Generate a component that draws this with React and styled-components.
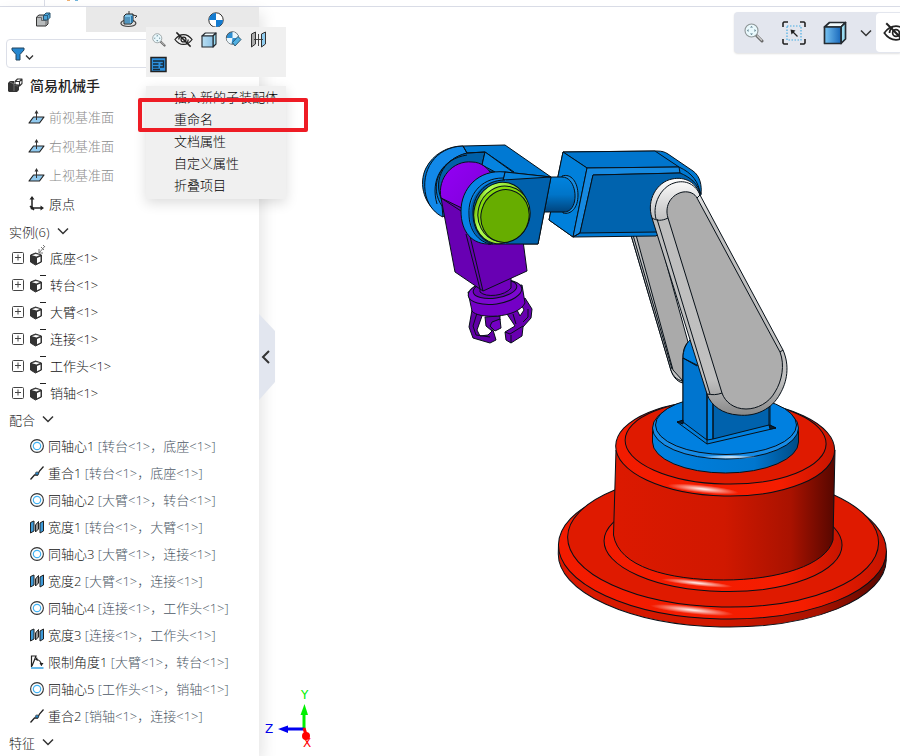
import React from "react";
import styled, { createGlobalStyle } from "styled-components";

const GlobalStyle = createGlobalStyle`
  * {
    box-sizing: border-box;
  }
  body {
    margin: 0;
    background: #fff;
    color: #222;
    font-family: "Open Sans", "Noto Sans CJK SC", sans-serif;
    font-size: 13px;
    font-weight: 300;
  }
  button {
    border: 0;
    padding: 0;
    background: none;
    color: inherit;
    font: inherit;
    cursor: pointer;
  }
  svg {
    display: block;
  }
`;

const Page = styled.div`
  display: flex;
  flex-direction: column;
  min-height: 100vh;
  overflow: hidden;
`;

const TopStrip = styled.header`
  display: flex;
  height: 7px;
  border-bottom: 1px solid #d9dce6;
`;

const StripCell = styled.div`
  width: 45px;
  border-right: 1px solid #d9dce6;
`;

const StripMark = styled.i`
  width: 3px;
  height: 1px;
  margin-left: ${({ gap }) => gap}px;
  background: ${({ color }) => color};
`;

const Main = styled.main`
  position: relative;
  display: flex;
  flex: 1;
`;

const Sidebar = styled.aside`
  position: relative;
  z-index: 1;
  width: 259px;
  flex: none;
  background: #fff;
  box-shadow: 4px 6px 14px rgba(0, 0, 0, 0.1);
`;

const Tabs = styled.div`
  display: flex;
`;

const Tab = styled.button`
  display: flex;
  flex: 1;
  height: 25px;
  align-items: center;
  justify-content: center;
  background: ${({ $active }) => ($active ? "#fff" : "#e9e9e9")};
`;

const Filter = styled.button`
  display: flex;
  width: 246px;
  height: 29px;
  margin: 7px 6px 0;
  padding-left: 4px;
  align-items: center;
  border: 1px solid #dcdfe8;
  border-radius: 4px;
`;

const RootRow = styled.div`
  display: flex;
  height: 34px;
  padding-left: 7px;
  align-items: center;
  gap: 7px;
  font-size: 14px;
  font-weight: 500;
`;

const List = styled.ul`
  margin: 0;
  padding: 0;
  list-style: none;
`;

const Row = styled.li`
  display: flex;
  height: ${({ $tall }) => ($tall ? 29 : 27)}px;
  padding-left: ${({ $indent }) => $indent}px;
  align-items: center;
  gap: 4px;
  color: ${({ $muted }) => ($muted ? "#8c8c8c" : "#111")};
  white-space: nowrap;
`;

const Heading = styled.button`
  display: flex;
  height: 26px;
  padding-left: 9px;
  align-items: center;
  gap: 7px;
`;

const Refs = styled.span`
  color: #4c5866;
`;

const Viewport = styled.section`
  position: relative;
  flex: 1;
  min-width: 0;
`;

const Scene = styled.svg`
  width: 100%;
  height: 100%;
`;

const Handle = styled.button`
  position: absolute;
  z-index: 2;
  top: 307px;
  left: 259px;
  width: 16px;
  height: 86px;
`;

const ViewBar = styled.div`
  position: absolute;
  top: 5px;
  right: 0;
  display: flex;
  height: 41px;
  width: 166px;
  overflow: hidden;
  align-items: center;
  border-radius: 4px 0 0 4px;
  background: #e3e6ee;
  box-shadow: 0 1px 2px rgba(0, 0, 0, 0.12);
`;

const ViewButton = styled.button`
  display: flex;
  width: ${({ $width }) => $width}px;
  height: 39px;
  flex: none;
  align-items: center;
  justify-content: center;
  border-radius: 4px;
  background: ${({ $lit }) => ($lit ? "#fff" : "none")};
`;

const Popup = styled.div`
  position: absolute;
  z-index: 3;
  top: 20px;
  left: 146px;
  display: flex;
  width: 140px;
  flex-direction: column;
  gap: 9px;
`;

const QuickBar = styled.div`
  display: flex;
  flex-wrap: wrap;
  background: #f0f0f0;
`;

const QuickButton = styled.button`
  display: flex;
  width: 25px;
  height: 25px;
  align-items: center;
  justify-content: center;
`;

const Menu = styled.div`
  display: flex;
  padding-bottom: 3px;
  flex-direction: column;
  background: #f0f0f0;
  box-shadow: 0 4px 12px rgba(0, 0, 0, 0.14);
`;

const MenuItem = styled.button`
  height: 22px;
  padding-left: 28px;
  color: #000;
  line-height: 20px;
  text-align: left;
  white-space: nowrap;
`;

const Highlight = styled.div`
  position: absolute;
  z-index: 4;
  top: 91px;
  left: 138px;
  width: 170px;
  height: 34px;
  border: 4px solid #ee1c25;
  border-radius: 2px;
`;

const Chevron = () => (
  <svg width="12" height="8" fill="none" stroke="#333" strokeWidth="1.5">
    <path d="M1 1.5 6 6.500 11 1.5" />
  </svg>
);

const PartIcon = () => (
  <svg width="16" height="16" viewBox="0 0 16 16" strokeLinejoin="round">
    <path d="M1.5 5 4 3h5v4h4v5l-2 2H1.500z" fill="#b9bcbd" stroke="#333" />
    <path d="M1.500 5.500h5v3h4.500V14M11 8.500l2-1.500" fill="none" stroke="#555" strokeWidth=".8" />
    <path d="M8.500 3.500 11 1h4v4.500L12.500 8h-4z" fill="#4aa3d8" stroke="#27506b" />
    <path d="M8.500 3.500h4V8M12.500 3.500 15 1" fill="none" stroke="#27506b" strokeWidth=".8" />
  </svg>
);

const ConfigIcon = () => (
  <svg width="18" height="17" viewBox="0 0 18 17">
    <path d="M4 9.500c-5 1.500-4 6 4.500 6s9-4.500 4.500-6" fill="#ddd" stroke="#444" strokeWidth="1.200" />
    <path d="M9 0v4M13 4l4 1-2 2" fill="none" stroke="#333" />
    <path d="M4 5 6 3h7v7.500L11 13H4z" fill="#7ec3e8" stroke="#222" strokeLinejoin="round" />
    <path d="M11 5h2v6l-2 1z" fill="#2d77a8" />
    <path d="M5 7h5M5 9h5M5 11h5" stroke="#256997" />
  </svg>
);

const MassIcon = () => (
  <svg width="16" height="16" viewBox="0 0 16 16">
    <circle cx="8" cy="8" r="7.200" fill="#fff" stroke="#333" />
    <path d="M8 8V1a7 7 0 0 0-7 7zM8 8v7a7 7 0 0 0 7-7z" fill="#137bd0" />
  </svg>
);

const FunnelIcon = () => (
  <svg width="24" height="16" viewBox="0 0 24 16">
    <path d="M1 2h12v2L9 8.500V14H5V8.500L1 4z" fill="#2687cf" stroke="#23455f" strokeLinejoin="round" />
    <path d="m15 9.500 3.500 3.500L22 9.500" fill="none" stroke="#333" strokeWidth="1.300" />
  </svg>
);

const AssemblyIcon = () => (
  <svg width="16" height="15" viewBox="0 0 16 15" strokeLinejoin="round">
    <path d="M1 5 3 3h4v3l5 1v5l-2 2H2l-1-1z" fill="#333" />
    <path d="m3 4 4 2v7M7 7l4 1" fill="none" stroke="#888" strokeWidth=".7" />
    <path d="M8 3.500 10.500 1H15v4.500L12.500 8V3.500H8V7h4.500M12.500 3.500 15 1" fill="none" stroke="#333" strokeWidth="1.100" />
  </svg>
);

const PlaneIcon = () => (
  <svg width="17" height="16" viewBox="0 0 17 16">
    <path d="M1 14 5.500 8H16l-4.500 6z" fill="#90c9ee" stroke="#222" strokeWidth="1.200" strokeLinejoin="round" />
    <path d="M8.500 11V2.500" stroke="#333" />
    <path d="M6.500 4.500 8.500 1l2 3.500z" fill="#333" />
  </svg>
);

const OriginIcon = () => (
  <svg width="17" height="17" viewBox="0 0 17 17">
    <path d="M4 2.500V13h10M2 11l4 4" fill="none" stroke="#222" strokeWidth="1.500" />
    <path d="M1.500 4.500 4 1l2.500 3.500zM12.500 10.500 16 13l-3.500 2.500z" fill="#222" />
    <circle cx="4" cy="13" r="1.500" fill="#222" />
  </svg>
);

const ExpandIcon = () => (
  <svg width="12" height="12" fill="none" stroke="#444">
    <rect x=".5" y=".5" width="11" height="11" rx="1" />
    <path d="M3 5.500h6M6 2.500v6" />
  </svg>
);

const BodyIcon = ({ fixed }) => (
  <svg width="18" height="26" viewBox="0 0 18 26">
    <g transform="translate(1 1)">
      <path d="m1.500 9 5-2 6 2v7l-6 3-5-3z" fill="#333" stroke="#333" strokeLinejoin="round" />
      <path d="m3 9.200 3.700-1.300 4.300 1.200-3.500 1.500zM8 12l3.500-1.600v5L8 17.200z" fill="#fff" />
    </g>
    {fixed ? (
      <path d="m11 8 6-7M11 4v4h4M13 2l3 3M15 0l2 2" fill="none" stroke="#777" />
    ) : (
      <path d="M12 3.500h6" stroke="#222" />
    )}
  </svg>
);

const ConcentricIcon = () => (
  <svg width="14" height="14" fill="none">
    <circle cx="7" cy="7" r="6.400" stroke="#333" strokeWidth="1.100" />
    <circle cx="7" cy="7" r="3.700" stroke="#42b3f4" strokeWidth="1.200" />
  </svg>
);

const CoincidentIcon = () => (
  <svg width="14" height="14" viewBox="0 0 14 14">
    <path d="m.5 13.500 4-4.500h3l2-4 4-4.500" fill="none" stroke="#222" strokeWidth="1.300" />
    <circle cx="7" cy="7.500" r="1.600" fill="#2385c8" stroke="#333" strokeWidth=".7" />
  </svg>
);

const WidthIcon = () => (
  <svg width="14" height="14" viewBox="0 0 14 14" stroke="#222" strokeLinejoin="round">
    <path d="M.5 2.500 4 1v10L.5 13zM10 3l3.500-2v10L10 13z" fill="#3e9ad8" />
    <path d="M5.500 5 8.500 1.500V9l-3 3z" fill="#999" />
  </svg>
);

const AngleIcon = () => (
  <svg width="14" height="14" viewBox="0 0 14 14">
    <path d="M1.500 12V1h4.500L2 11M6 4.500c3 0 5 2 5.500 6" fill="none" stroke="#222" strokeWidth="1.200" />
    <path d="m7 2-2 2.500L8 6zM9.500 8h4l-2 3z" fill="#222" />
    <path d="M1 13h12.500" stroke="#1593df" strokeWidth="1.300" />
  </svg>
);

const ZoomIcon = ({ size }) => (
  <svg width={size} height={size} viewBox="0 0 20 20">
    <path d="m12.500 12.500 5.500 5.500" stroke="#666" strokeWidth="3" strokeLinecap="round" />
    <path d="m13 12.500 5 5" stroke="#ccc" strokeWidth="1.400" />
    <circle cx="7.500" cy="7.500" r="6.500" fill="#e9f8fc" stroke="#8e9697" strokeWidth="1.100" />
    <path d="M6 4.500 7.500 3 9 4.500zM6 10.500 7.500 12 9 10.500zM4.500 6 3 7.500 4.500 9zM10.500 6 12 7.500 10.500 9z" fill="#567987" />
  </svg>
);

const HiddenIcon = ({ size }) => (
  <svg width={size} height={size} viewBox="0 0 20 20" fill="none" stroke="#222" strokeWidth="1.300">
    <path d="M1 10c5-7 13-7 18 0-5 7-13 7-18 0z" />
    <path d="M5 10c0-2 1-3.500 2.500-4.500M15 10c0 2-1 3.500-2.500 4.500" />
    <circle cx="10" cy="10" r="2.600" />
    <path d="m2.500 2.500 15 15" strokeWidth="1.500" />
  </svg>
);

const CubeIcon = ({ size, flat }) => (
  <svg width={size} height={size} viewBox="0 0 24 24" stroke="#252b31" strokeWidth="1.700" strokeLinejoin="round">
    <defs>
      <linearGradient id={flat ? "cubeFlat" : "cubeRich"}>
        <stop offset="0" stopColor={flat ? "#b9dff3" : "#78c4f2"} />
        <stop offset="1" stopColor={flat ? "#8dc2e5" : "#1767bb"} />
      </linearGradient>
    </defs>
    <path d="m1.500 6 5-4.500h16L18 6z" fill="#f2fbfd" />
    <path d="m18 6 4.500-4.500V18L18 22.500z" fill="#9adcf2" />
    <path d="M1.500 6H18v16.500H1.500z" fill={`url(#${flat ? "cubeFlat" : "cubeRich"})`} />
  </svg>
);

const AppearanceIcon = () => (
  <svg width="17" height="17" viewBox="0 0 17 17">
    <circle cx="7.500" cy="7" r="6.200" fill="#2e8fd2" stroke="#555" />
    <path d="M7.500 7V1c3 0 5.500 2 6 5l-1 1zM7.500 7H1.500c0 3 2 5.500 5 6z" fill="#eaf6fc" />
    <path d="m7.500 11.500 5.500-6 3 3-6 6.500z" fill="#50b0e2" stroke="#315d77" strokeLinejoin="round" />
  </svg>
);

const MirrorIcon = () => (
  <svg width="17" height="17" viewBox="0 0 17 17" stroke="#333">
    <path d="m1.500 3 4-2v12l-4 3z" fill="#aaa" />
    <path d="m11.500 3 4-2v12l-4 3z" fill="#90cdf0" />
    <path d="M4 8.500h9M8.500 3v12" strokeWidth=".9" />
  </svg>
);

const PropertiesIcon = () => (
  <svg width="17" height="17" viewBox="0 0 17 17">
    <path d="M1 1.500h15v14H1z" fill="#2d91df" stroke="#222" strokeWidth="1.500" />
    <path d="M3 5h10.500v6H10M3 8h5.500M3 11h5.500M10.500 8H13M3 13.500h7" fill="none" stroke="#152b3c" strokeWidth="1.400" />
  </svg>
);

const SelectIcon = () => (
  <svg width="24" height="24" viewBox="0 0 24 24" fill="none">
    <path d="M1 6V2l1-1h4M18 1h4l1 1v4M23 18v4l-1 1h-4M6 23H2l-1-1v-4" stroke="#222" strokeWidth="1.600" />
    <path d="M5 5h14v14H5z" stroke="#48aee4" strokeWidth="1.200" strokeDasharray="1.500 1.500" />
    <path d="m10 10 5.500 5.500" stroke="#222" strokeWidth="1.300" />
    <path d="m8.500 8.500 5 1-4 4z" fill="#222" />
  </svg>
);

const Shine = ({ x, y, rx, ry, angle = 6 }) => (
  <ellipse
    cx={x}
    cy={y}
    rx={rx}
    ry={ry}
    fill="url(#shine)"
    stroke="none"
    transform={`rotate(${angle} ${x} ${y})`}
  />
);

const Base = () => (
  <g>
    <g transform="rotate(1.200 723 545)">
      <path d="M558.500 548v9a164 70 0 0 0 328 0v-9z" fill="url(#redSide)" />
      <ellipse cx="722.500" cy="548" rx="164" ry="71" fill="url(#redFillet)" />
      <ellipse cx="723" cy="540" rx="155.500" ry="67" fill="#df1a00" />
      <ellipse cx="723" cy="543" rx="119" ry="48.500" fill="url(#redFillet)" />
    </g>
    <path d="M616 450 613.500 535c5 32 55 45 110 45s103-15 109.500-40l2-90z" fill="url(#redSide)" />
    <g transform="rotate(1.200 725 447)">
      <ellipse cx="725.200" cy="448" rx="109.500" ry="48" fill="url(#redFillet)" />
      <ellipse cx="725.500" cy="442" rx="100.500" ry="42" fill="#df1a00" />
    </g>
    <Shine x={703} y={489} rx={36} ry={4} />
    <Shine x={697} y={583} rx={36} ry={3} />
    <Shine x={692} y={610} rx={42} ry={4} />
  </g>
);

const Turntable = () => (
  <g>
    <path d="M652.500 428v14a73 31 0 0 0 146 0v-14z" fill="url(#blueSide)" />
    <ellipse cx="725.500" cy="428" rx="73" ry="31" fill="#168be6" />
    <ellipse cx="726" cy="425" rx="70.500" ry="29.500" fill="#0080e0" />
    <Shine x={730} y={457} rx={28} ry={2} angle={0} />
    <path d="m677 422 6-1v-63c0-8 3-14 7-18l80 60v25l6 3-69 16z" fill="#0080df" />
    <path d="M683 358v64l24 18v-70z" fill="#0075cf" />
    <path d="M713 370v69l56-14v-50z" fill="#0062ad" />
    <path d="M683 358 697 366M707 370v70l6-1v-60M707 444v-4" fill="none" />
    <path d="m677 422 6-2v4zM769 425l7 3-6 1z" fill="#04233c" />
  </g>
);

const RearArm = () => (
  <g>
    <path d="M631 235 670 367c2 9 7 15 13 16v-26c0-7 2-12 5-15l-30-109z" fill="#aaa" />
    <path d="M631 235h5l37 135 10 11c-7-1-11-6-13-14z" fill="#c4c4c4" />
    <path d="m633 235 39 134" fill="none" />
  </g>
);

const FrontArm = () => (
  <g>
    <path d="M652 218c-6-18 5-36 20-39 13-3 25 4 28 16l83 155c7 16 4 32-3 44-8 15-24 23-42 21-15-1-27-9-31-21z" fill="url(#armEdge)" />
    <path d="M668 218c-4-13 4-24 15-26 7-1 12 2 14 6l83 154c5 13 2 29-5 40-6 11-18 17-29 17-12 0-21-7-24-16z" fill="#adadad" />
    <path d="m657 219 53 175M652 218c5 3 10 3 16 0M697 198l3-3M780 352l3-2M707 394c5 1 10 1 15-1" fill="none" />
    <path d="M656 219c-4-15 5-32 18-36 12-4 22 2 26 12" fill="none" />
  </g>
);

const UpperArm = () => (
  <g>
    <path d="M563 152 657 151c5 0 8 1 11 3l25 17c7 5 9 14 8 24L656 236l-83 1-24-17z" fill="#0079d3" />
    <path d="m563 152 92-1 24 16-92 1z" fill="#0075cd" />
    <path d="M563 152 587 168 573 237 549 220z" fill="#0080db" />
    <path d="m587 168 92-1 1 6-87 2-13 58-7 4z" fill="#1689e0" />
    <path d="m593 175 87-2 15 8-38 51-77 1z" fill="#0063ae" stroke="none" />
    <path d="m657 232-77 1 13-58 87-2c10 4 18 11 21 21M679 167c13 6 20 15 21 27M580 233l-7 4" fill="none" />
    <path d="M562 176c9-3 16 6 16 19s-7 20-15 18z" fill="#168be0" />
    <path d="M545 177h17c16 0 18 35 2 35h-21z" fill="url(#shaft)" />
  </g>
);

const Gripper = () => (
  <g strokeLinejoin="round">
    <path d="m485 317 1 9 6 5 1-7 7-4v-4zM472 310l-3 17 4 11 17 5 6-3-3-10-5 5-8 1-3-6 5-14z" fill="#6100a6" />
    <path d="m492 322 8-3 1 9-6 3-5-5z" fill="#7400c4" />
    <path d="m507 314 8 12-10 6 1 8 5 3 11-7 1-9 8-9 1-9-7-11-5 4 4 8-4 6-4-8z" fill="#6800b0" />
    <path d="m473 326 3 9 14 2M505 332l5 2 13-8M511 343v-8M523 322l5-5v-8M516 324l-3-10M473 326l4-13" fill="none" />
    <path d="m468 292 4 19c5 8 45 8 53-8l-3-18z" fill="#7400c6" />
    <ellipse cx="495" cy="292" rx="27" ry="12" fill="#7c08cf" transform="rotate(-8 495 292)" />
    <ellipse cx="495" cy="289" rx="22" ry="9" fill="#6900b4" transform="rotate(-8 495 289)" />
    <path d="M480 282v10c6 6 25 4 31-4v-10z" fill="#7000bd" />
  </g>
);

const Wrist = () => (
  <g>
    <path d="M443 216c-19-9-25-32-17-48 7-14 22-22 37-22l42-1 46 32-13 67h-50z" fill="#0079d3" />
    <path d="M463 146c-28 1-43 25-37 50 3 11 10 18 17 21l-1-11c-12-17-6-44 25-53z" fill="#1289e9" />
    <path d="M467 153 485 152 480 173 444 204c-13-21-2-45 23-51z" fill="#0060a8" />
    <path d="M467 155c-25 4-37 25-30 49" fill="none" />
    <path d="m463 146 4 7 18-1 29 20-28-1-3-7 2-12" fill="none" />
    <path d="M485 152 482 165l15 8h17z" fill="#0583df" />
    <path d="M441 198c-4-20 12-38 31-36 9 0 16 6 20 13l-31 42z" fill="url(#purple)" />
    <path d="m441 198 14 74 28 19 44-20-5-38-54-22z" fill="#6800b3" />
    <path d="m441 198 20 13M466 234l14 55M470 236l13 55" fill="none" />
    <path d="m488 174 17-2 46 5-13 67h-50z" fill="#0061ad" />
    <path d="M505 172l46 5-48 3z" fill="#0782dc" />
    <path d="M505 172c-27-3-44 17-44 39 0 21 11 34 30 33 8-2 10-50 12-64z" fill="#0884e5" />
    <path d="M503 180c-20 0-33 16-33 34 0 16 9 28 21 30h15V180z" fill="#0061ad" stroke="none" />
    <path d="M503 178c-23 0-35 18-34 36 0 16 9 28 22 30M505 180c-21 0-33 17-32 34 0 15 8 27 20 30" fill="none" />
    <ellipse cx="501" cy="213" rx="27" ry="31" fill="url(#green)" transform="rotate(15 501 213)" />
    <ellipse cx="504" cy="214" rx="26" ry="28" fill="#83d90b" transform="rotate(15 504 214)" />
    <ellipse cx="505" cy="216" rx="24" ry="26.500" fill="#67ad00" transform="rotate(15 505 216)" />
  </g>
);

const Axes = () => (
  <g fontFamily="DejaVu Sans, sans-serif" fontSize="12" fontWeight="400">
    <path d="M304 729v-16" stroke="#00f000" strokeWidth="3" />
    <path d="m300.500 715 4-11 3.500 11z" fill="#00f000" />
    <path d="M304 729h-18" stroke="#0000f0" strokeWidth="3" />
    <path d="m288 725.500-10 3.500 10 4z" fill="#0000f0" />
    <path d="m304 728 3 10" stroke="#f00" strokeWidth="3" />
    <circle cx="306" cy="736" r="4" fill="#f00" />
    <text x="301" y="699" fill="#00f000">Y</text>
    <text x="265" y="733" fill="#0000f0">Z</text>
    <text x="303" y="747" fill="#f00">X</text>
  </g>
);

const Gradient = ({ id, stops, ...rest }) => (
  <linearGradient id={id} {...rest}>
    {stops.map(([offset, color]) => (
      <stop key={offset} offset={offset} stopColor={color} />
    ))}
  </linearGradient>
);

const RobotScene = () => (
  <Scene viewBox="259 7 641 749" preserveAspectRatio="xMidYMid meet" role="img" aria-label="简易机械手">
    <defs>
      <Gradient id="redSide" stops={[[0, "#dc1900"], [0.5, "#d01800"], [0.8, "#a91200"], [1, "#560700"]]} />
      <Gradient id="redFillet" stops={[[0, "#f21b00"], [0.75, "#f51d00"], [1, "#c71500"]]} />
      <Gradient id="blueSide" stops={[[0, "#0081df"], [0.7, "#0076ce"], [1, "#004b85"]]} />
      <Gradient id="armEdge" x2="0" y2="1" stops={[[0, "#fff"], [0.18, "#bebebe"], [0.85, "#c0c0c0"], [1, "#888"]]} />
      <Gradient id="shaft" x2="0" y2="1" stops={[[0, "#0083df"], [0.5, "#0075c9"], [1, "#00447d"]]} />
      <Gradient id="purple" x2="1" y2="1" stops={[[0, "#9400f5"], [0.6, "#8500e2"], [1, "#6000a5"]]} />
      <Gradient id="green" stops={[[0, "#73bd05"], [0.15, "#b2ff55"], [1, "#71c200"]]} />
      <radialGradient id="shine">
        <stop offset="0" stopColor="#fff" stopOpacity=".95" />
        <stop offset="1" stopColor="#fff" stopOpacity="0" />
      </radialGradient>
    </defs>
    <g stroke="#071018" strokeWidth="1">
      <Base />
      <RearArm />
      <Turntable />
      <UpperArm />
      <FrontArm />
      <Gripper />
      <Wrist />
    </g>
    <Axes />
  </Scene>
);

const planes = ["前视基准面", "右视基准面", "上视基准面"];
const parts = ["底座", "转台", "大臂", "连接", "工作头", "销轴"];
const mates = [
  [ConcentricIcon, "同轴心1", "转台", "底座"],
  [CoincidentIcon, "重合1", "转台", "底座"],
  [ConcentricIcon, "同轴心2", "大臂", "转台"],
  [WidthIcon, "宽度1", "转台", "大臂"],
  [ConcentricIcon, "同轴心3", "大臂", "连接"],
  [WidthIcon, "宽度2", "大臂", "连接"],
  [ConcentricIcon, "同轴心4", "连接", "工作头"],
  [WidthIcon, "宽度3", "连接", "工作头"],
  [AngleIcon, "限制角度1", "大臂", "转台"],
  [ConcentricIcon, "同轴心5", "工作头", "销轴"],
  [CoincidentIcon, "重合2", "销轴", "连接"],
];
const actions = ["插入新的子装配体", "重命名", "文档属性", "自定义属性", "折叠项目"];

const FeatureTree = () => (
  <Sidebar>
    <Tabs>
      <Tab $active aria-label="模型"><PartIcon /></Tab>
      <Tab aria-label="配置"><ConfigIcon /></Tab>
      <Tab aria-label="质量"><MassIcon /></Tab>
    </Tabs>
    <Filter aria-label="筛选"><FunnelIcon /></Filter>
    <RootRow><AssemblyIcon />简易机械手</RootRow>
    <List>
      {planes.map((name) => (
        <Row key={name} $tall $muted $indent={28}><PlaneIcon />{name}</Row>
      ))}
      <Row $tall $indent={28}><OriginIcon />原点</Row>
    </List>
    <Heading>实例(6)<Chevron /></Heading>
    <List>
      {parts.map((name, index) => (
        <Row key={name} $indent={12}>
          <ExpandIcon />
          <BodyIcon fixed={index === 0} />
          {name}&lt;1&gt;
        </Row>
      ))}
    </List>
    <Heading>配合<Chevron /></Heading>
    <List>
      {mates.map(([Icon, name, from, to]) => (
        <Row key={name} $indent={30}>
          <Icon />
          <span>
            {name} <Refs>[{from}&lt;1&gt;，{to}&lt;1&gt;]</Refs>
          </span>
        </Row>
      ))}
    </List>
    <Heading>特征<Chevron /></Heading>
  </Sidebar>
);

export default () => (
  <Page>
    <GlobalStyle />
    <TopStrip>
      <StripCell />
      <StripMark gap={22} color="#f0b070" />
      <StripMark gap={5} color="#70b5dc" />
    </TopStrip>
    <Main>
      <FeatureTree />
      <Viewport>
        <RobotScene />
        <ViewBar>
          <ViewButton $width={40} aria-label="缩放"><ZoomIcon size={20} /></ViewButton>
          <ViewButton $width={40} aria-label="框选"><SelectIcon /></ViewButton>
          <ViewButton $width={42} aria-label="显示样式"><CubeIcon size={24} /></ViewButton>
          <ViewButton $width={20} aria-label="更多样式"><Chevron /></ViewButton>
          <ViewButton $width={40} $lit aria-label="隐藏"><HiddenIcon size={26} /></ViewButton>
        </ViewBar>
      </Viewport>
      <Handle aria-label="收起">
        <svg width="16" height="86">
          <path d="M0 0 16 17v51L0 86z" fill="#e2e6ef" />
          <path d="m10 37-6 6 6 6" fill="none" stroke="#333" strokeWidth="2" />
        </svg>
      </Handle>
      <Popup>
        <QuickBar>
          <QuickButton aria-label="缩放到"><ZoomIcon size={14} /></QuickButton>
          <QuickButton aria-label="隐藏"><HiddenIcon size={19} /></QuickButton>
          <QuickButton aria-label="透明"><CubeIcon size={16} flat /></QuickButton>
          <QuickButton aria-label="外观"><AppearanceIcon /></QuickButton>
          <QuickButton aria-label="镜像"><MirrorIcon /></QuickButton>
          <QuickButton aria-label="属性"><PropertiesIcon /></QuickButton>
        </QuickBar>
        <Menu role="menu">
          {actions.map((label) => (
            <MenuItem key={label} role="menuitem">{label}</MenuItem>
          ))}
        </Menu>
      </Popup>
      <Highlight />
    </Main>
  </Page>
);
